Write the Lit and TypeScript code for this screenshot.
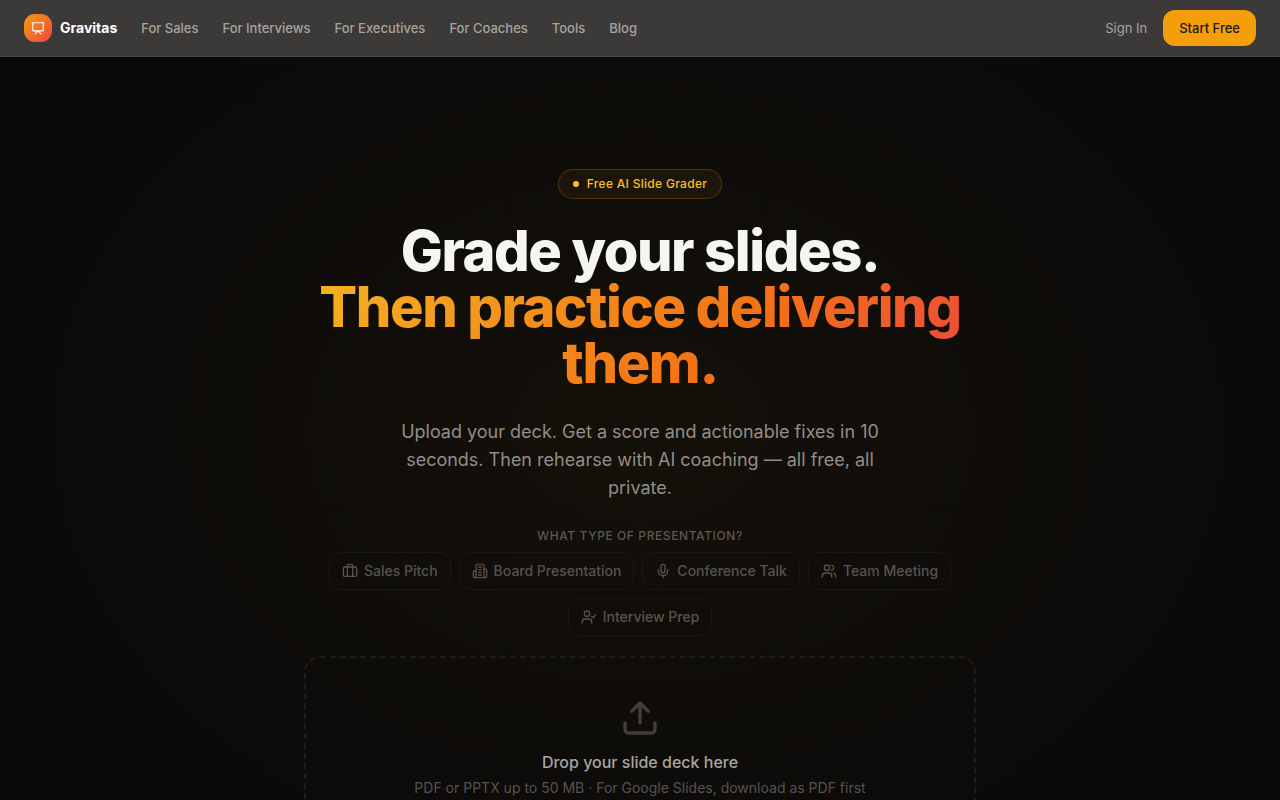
import { LitElement, html, css, svg } from "lit";
import { customElement, state } from "lit/decorators.js";

const LINKS = ["For Sales", "For Interviews", "For Executives", "For Coaches", "Tools", "Blog"];

const TYPES = [
  {
    label: "Sales Pitch",
    icon: svg`<rect x="2" y="6" width="20" height="14" rx="2"/><path d="M16 20V4a2 2 0 0 0-2-2h-4a2 2 0 0 0-2 2v16"/>`,
  },
  {
    label: "Board Presentation",
    icon: svg`<path d="M6 22V4a2 2 0 0 1 2-2h8a2 2 0 0 1 2 2v18Z"/><path d="M6 12H4a2 2 0 0 0-2 2v6a2 2 0 0 0 2 2h2"/><path d="M18 9h2a2 2 0 0 1 2 2v9a2 2 0 0 1-2 2h-2"/><path d="M10 6h4M10 10h4M10 14h4M10 18h4"/>`,
  },
  {
    label: "Conference Talk",
    icon: svg`<path d="M12 2a3 3 0 0 0-3 3v7a3 3 0 0 0 6 0V5a3 3 0 0 0-3-3Z"/><path d="M19 10v2a7 7 0 0 1-14 0v-2"/><path d="M12 19v3"/>`,
  },
  {
    label: "Team Meeting",
    icon: svg`<path d="M16 21v-2a4 4 0 0 0-4-4H6a4 4 0 0 0-4 4v2"/><circle cx="9" cy="7" r="4"/><path d="M22 21v-2a4 4 0 0 0-3-3.87"/><path d="M16 3.13a4 4 0 0 1 0 7.75"/>`,
  },
  {
    label: "Interview Prep",
    icon: svg`<path d="M16 21v-2a4 4 0 0 0-4-4H6a4 4 0 0 0-4 4v2"/><circle cx="9" cy="7" r="4"/><path d="m16 11 2 2 4-4"/>`,
  },
];

@customElement("app-root")
export class AppRoot extends LitElement {
  static styles = css`
    :host {
      display: flex;
      flex-direction: column;
      min-height: 100vh;
      background: #0b0a09;
      color: #f5f5f4;
      font-family: Inter, "Liberation Sans", sans-serif;
    }
    * {
      box-sizing: border-box;
    }
    a {
      color: inherit;
      text-decoration: none;
    }
    svg {
      display: block;
      flex: none;
      fill: none;
      stroke: currentColor;
      stroke-linecap: round;
      stroke-linejoin: round;
      stroke-width: 2;
    }
    .bar {
      display: flex;
      align-items: center;
      justify-content: space-between;
      height: 57px;
      padding: 0 24px;
      background: #3c3a38;
      border-bottom: 1px solid #4a4845;
      font-size: 13px;
      line-height: 20px;
      color: #a8a29e;
    }
    .left {
      display: flex;
      align-items: center;
      gap: 24px;
    }
    .brand {
      display: flex;
      align-items: center;
      gap: 8px;
      font-size: 14px;
      font-weight: 700;
      color: #fff;
    }
    .logo {
      display: grid;
      place-items: center;
      width: 28px;
      height: 28px;
      border-radius: 11px;
      background: linear-gradient(135deg, #f59e0b, #ef4444);
    }
    .links {
      display: flex;
      gap: 24px;
      font-weight: 500;
    }
    .right {
      display: flex;
      align-items: center;
      gap: 16px;
      padding-bottom: 1px;
    }
    .start {
      height: 36px;
      padding: 0 16px;
      border: 0;
      border-radius: 12px;
      background: #f59e0b;
      color: #1c1917;
      font: 500 13px/20px Inter, "Liberation Sans", sans-serif;
      cursor: pointer;
    }
    .hero {
      flex: 1;
      display: flex;
      flex-direction: column;
      align-items: center;
      padding: 112px 24px 96px;
      text-align: center;
      background: radial-gradient(ellipse 660px 500px at 50% 372px, rgba(245, 158, 11, 0.038), transparent);
    }
    .pill {
      display: flex;
      align-items: center;
      gap: 8px;
      padding: 6px 14px;
      border: 1px solid rgba(245, 158, 11, 0.24);
      border-radius: 15px;
      background: rgba(245, 158, 11, 0.06);
      color: #fbbf24;
      font-size: 12px;
      font-weight: 500;
      line-height: 16px;
      letter-spacing: 0.025em;
    }
    .dot {
      width: 6px;
      height: 6px;
      border-radius: 50%;
      background: #fbbf24;
    }
    .content {
      width: 100%;
      max-width: 672px;
      display: flex;
      flex-direction: column;
      align-items: center;
    }
    h1 {
      margin: 24px 0 0;
      font-size: 56px;
      line-height: 56px;
      font-weight: 800;
      letter-spacing: -0.025em;
      color: #f5f5f4;
    }
    .accent {
      display: block;
      color: transparent;
      background: linear-gradient(135deg, #f5b223, #f37415 60%, #ea4440);
      -webkit-background-clip: text;
      background-clip: text;
    }
    .lead {
      max-width: 512px;
      margin: 27px 0 0;
      font-size: 18px;
      line-height: 28px;
      color: #928d88;
    }
    fieldset {
      width: 100%;
      margin: 26px 0 0;
      padding: 0;
      border: 0;
    }
    legend {
      width: 100%;
      padding: 0 0 8px;
      font-size: 12px;
      font-weight: 500;
      line-height: 16px;
      letter-spacing: 0.05em;
      text-transform: uppercase;
      color: #5c5753;
    }
    .types {
      display: flex;
      flex-wrap: wrap;
      justify-content: center;
      gap: 8px;
    }
    .type {
      display: flex;
      align-items: center;
      gap: 6px;
      padding: 8px 12px;
      border: 1px solid #1a1813;
      border-radius: 12px;
      background: transparent;
      color: #57524e;
      font: 500 14px/20px Inter, "Liberation Sans", sans-serif;
      cursor: pointer;
    }
    .type[aria-pressed="true"] {
      border-color: #f59e0b;
      color: #fbbf24;
    }
    .drop {
      display: flex;
      flex-direction: column;
      align-items: center;
      width: 100%;
      margin-top: 20px;
      padding: 40px 32px;
      border: 2px dashed #1f1d1b;
      border-radius: 16px;
      cursor: pointer;
    }
    .drop svg {
      color: #413e3b;
    }
    .title {
      margin-top: 12px;
      font-size: 16px;
      font-weight: 500;
      line-height: 24px;
      color: #a8a5a2;
    }
    .note {
      margin-top: 4px;
      font-size: 14px;
      line-height: 20px;
      color: #57524e;
    }
  `;

  @state() private selected = "";

  render() {
    return html`
      <header class="bar">
        <div class="left">
          <a class="brand" href="#">
            <span class="logo">
              <svg width="14" height="14" viewBox="0 0 24 24" aria-hidden="true"><path d="M2 3h20M3 3v13a1 1 0 0 0 1 1h16a1 1 0 0 0 1-1V3M7 22l5-5 5 5"/></svg>
            </span>
            Gravitas
          </a>
          <nav class="links">${LINKS.map((t) => html`<a href="#">${t}</a>`)}</nav>
        </div>
        <div class="right">
          <a href="#">Sign In</a>
          <button class="start" type="button">Start Free</button>
        </div>
      </header>
      <main class="hero">
        <div class="pill"><span class="dot"></span>Free AI Slide Grader</div>
        <div class="content">
          <h1>Grade your slides. <span class="accent">Then practice delivering them.</span></h1>
          <p class="lead">
            Upload your deck. Get a score and actionable fixes in 10 seconds. Then rehearse with AI coaching — all free,
            all private.
          </p>
          <fieldset>
            <legend>What type of presentation?</legend>
            <div class="types">
              ${TYPES.map(
                (t) => html`<button
                  class="type"
                  type="button"
                  aria-pressed=${this.selected === t.label}
                  @click=${() => (this.selected = t.label)}
                >
                  <svg width="16" height="16" viewBox="0 0 24 24" aria-hidden="true">${t.icon}</svg>${t.label}
                </button>`
              )}
            </div>
          </fieldset>
          <label class="drop">
            <input type="file" accept=".pdf,.pptx" hidden />
            <svg width="40" height="40" viewBox="0 0 24 24" aria-hidden="true"><path d="M21 15v4a2 2 0 0 1-2 2H5a2 2 0 0 1-2-2v-4M17 8l-5-5-5 5M12 3v12"/></svg>
            <span class="title">Drop your slide deck here</span>
            <span class="note">PDF or PPTX up to 50 MB · For Google Slides, download as PDF first</span>
          </label>
        </div>
      </main>
    `;
  }
}
